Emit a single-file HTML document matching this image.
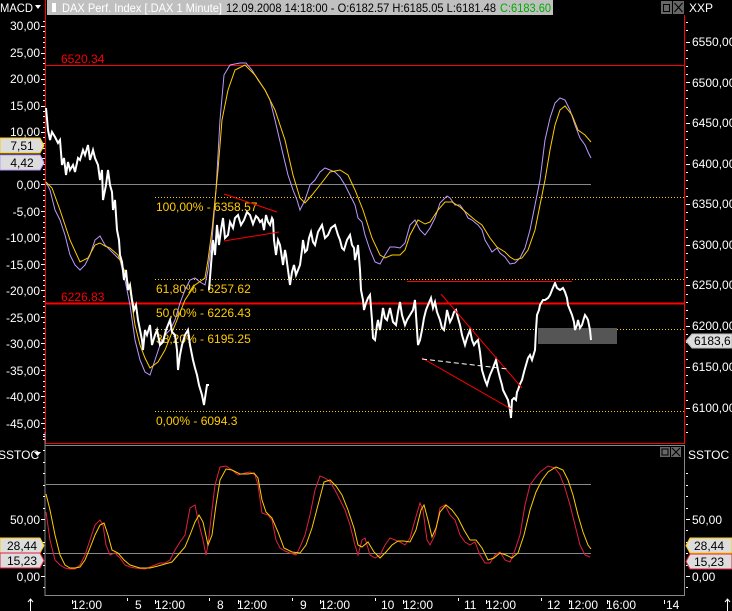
<!DOCTYPE html>
<html><head><meta charset="utf-8"><style>
html,body{margin:0;padding:0;background:#000;}
svg{display:block;font-family:"Liberation Sans",sans-serif;font-size:12px;}
</style></head><body>
<svg width="732" height="611" viewBox="0 0 732 611" xmlns="http://www.w3.org/2000/svg">
<rect width="732" height="611" fill="#000"/>
<!-- title bar -->
<rect x="47" y="0" width="506" height="15" fill="#c0c0c0"/>
<rect x="52" y="3" width="4" height="9" fill="#fff"/>
<text x="62" y="12" fill="#fff" textLength="160" lengthAdjust="spacingAndGlyphs">DAX Perf. Index [.DAX  1 Minute]</text>
<text x="226" y="12" fill="#000" textLength="270" lengthAdjust="spacingAndGlyphs">12.09.2008 14:18:00 - O:6182.57 H:6185.05 L:6181.48</text>
<text x="500" y="12" fill="#0a0" textLength="51" lengthAdjust="spacingAndGlyphs">C:6183.60</text>
<text x="0" y="12" fill="#fff" textLength="33" lengthAdjust="spacingAndGlyphs">MACD</text>
<path d="M35 5 L41 5 L38 9 Z" fill="#fff"/>
<rect x="661" y="1" width="11" height="13" fill="#666"/><rect x="663.5" y="4.5" width="6" height="7" fill="none" stroke="#000"/>
<rect x="673" y="1" width="11" height="13" fill="#666"/><path d="M674.5 3 L682.5 12 M682.5 3 L674.5 12" stroke="#000"/>
<text x="689" y="12" fill="#fff">XXP</text>

<!-- main chart borders -->
<line x1="45.5" y1="0" x2="45.5" y2="443" stroke="#f00"/>
<line x1="684.5" y1="15" x2="684.5" y2="443" stroke="#f00"/>
<line x1="45" y1="443.5" x2="685" y2="443.5" stroke="#f00"/>
<!-- lower panel border -->
<line x1="45" y1="445.5" x2="685" y2="445.5" stroke="#888"/>
<line x1="684.5" y1="445" x2="684.5" y2="596" stroke="#888"/>
<line x1="45" y1="432" x2="45" y2="596" stroke="#888"/>
<line x1="45" y1="595.5" x2="685" y2="595.5" stroke="#888"/>
<rect x="660" y="447" width="10" height="10" fill="#666"/><rect x="662" y="449" width="6" height="6" fill="none" stroke="#000"/>
<rect x="671" y="447" width="10" height="10" fill="#666"/><path d="M672 448 L680 456 M680 448 L672 456" stroke="#000"/>
<text x="688" y="459" fill="#fff">SSTOC</text>
<text x="-2" y="459" fill="#fff">SSTOC</text>
<path d="M34 452 L41 452 L37.5 456 Z" fill="#fff"/>

<!-- left axis -->
<g fill="#fff" text-anchor="end">
<text x="40" y="30">30,00</text><text x="40" y="57">25,00</text><text x="40" y="83">20,00</text>
<text x="40" y="110">15,00</text><text x="40" y="136">10,00</text>
<text x="40" y="189">0,00</text><text x="40" y="216">-5,00</text><text x="40" y="242">-10,00</text>
<text x="40" y="269">-15,00</text><text x="40" y="295">-20,00</text><text x="40" y="322">-25,00</text>
<text x="40" y="348">-30,00</text><text x="40" y="375">-35,00</text><text x="40" y="401">-40,00</text>
<text x="40" y="428">-45,00</text>
<text x="40" y="524">50,00</text><text x="40" y="581">0,00</text>
</g>
<g stroke="#fff">
<path d="M41 26.5h4M41 53.5h4M41 79.5h4M41 106.5h4M41 132.5h4M41 158.5h4M41 184.5h4M41 211.5h4M41 237.5h4M41 264.5h4M41 290.5h4M41 317.5h4M41 343.5h4M41 370.5h4M41 396.5h4M41 423.5h4M41 519.5h4M41 576.5h4"/>
<path d="M43 21.5h2M43 31.5h2M43 37.5h2M43 42.5h2M43 47.5h2M43 58.5h2M43 63.5h2M43 69.5h2M43 74.5h2M43 84.5h2M43 90.5h2M43 95.5h2M43 100.5h2M43 111.5h2M43 116.5h2M43 122.5h2M43 127.5h2M43 137.5h2M43 143.5h2M43 148.5h2M43 153.5h2M43 164.5h2M43 169.5h2M43 174.5h2M43 179.5h2M43 190.5h2M43 195.5h2M43 200.5h2M43 206.5h2M43 216.5h2M43 222.5h2M43 227.5h2M43 232.5h2M43 243.5h2M43 248.5h2M43 253.5h2M43 259.5h2M43 269.5h2M43 275.5h2M43 280.5h2M43 285.5h2M43 296.5h2M43 301.5h2M43 306.5h2M43 312.5h2M43 322.5h2M43 328.5h2M43 333.5h2M43 338.5h2M43 349.5h2M43 354.5h2M43 359.5h2M43 365.5h2M43 375.5h2M43 381.5h2M43 386.5h2M43 391.5h2M43 402.5h2M43 407.5h2M43 412.5h2M43 418.5h2M43 428.5h2M43 434.5h2M43 439.5h2"/>
<path d="M43 436.5h2M43 450.5h2M43 462.5h2M43 473.5h2M43 485.5h2M43 496.5h2M43 508.5h2M43 530.5h2M43 542.5h2M43 553.5h2M43 565.5h2M43 587.5h2"/>
</g>
<!-- left tags -->
<path d="M0 138 H40 L44 145.5 L40 153 H0 Z" fill="#ddd" stroke="#fc0"/>
<text x="22" y="150" text-anchor="middle" fill="#000">7,51</text>
<path d="M0 155 H40 L44 162.5 L40 170 H0 Z" fill="#ddd" stroke="#b9f"/>
<text x="22" y="167" text-anchor="middle" fill="#000">4,42</text>
<path d="M0 538 H40 L44 545.5 L40 553 H0 Z" fill="#ddd" stroke="#fc0"/>
<text x="22" y="550" text-anchor="middle" fill="#000">28,44</text>
<path d="M0 553 H40 L44 560.5 L40 568 H0 Z" fill="#ddd" stroke="#e02040"/>
<text x="22" y="565" text-anchor="middle" fill="#000">15,23</text>

<!-- right axis -->
<g fill="#fff">
<text x="692" y="46">6550,00</text><text x="692" y="87">6500,00</text><text x="692" y="127">6450,00</text>
<text x="692" y="168">6400,00</text><text x="692" y="208">6350,00</text><text x="692" y="249">6300,00</text>
<text x="692" y="289">6250,00</text><text x="692" y="330">6200,00</text><text x="692" y="371">6150,00</text>
<text x="692" y="412">6100,00</text><text x="692" y="524">50,00</text><text x="692" y="581">0,00</text>
</g>
<g stroke="#fff">
<path d="M686 42.5h4M686 82.5h4M686 123.5h4M686 164.5h4M686 204.5h4M686 245.5h4M686 285.5h4M686 326.5h4M686 367.5h4M686 408.5h4M686 519.5h4M686 576.5h4"/>
<path d="M686 22.5h2M686 30.5h2M686 50.5h2M686 58.5h2M686 66.5h2M686 74.5h2M686 90.5h2M686 98.5h2M686 107.5h2M686 115.5h2M686 131.5h2M686 139.5h2M686 147.5h2M686 155.5h2M686 172.5h2M686 180.5h2M686 188.5h2M686 196.5h2M686 212.5h2M686 220.5h2M686 229.5h2M686 237.5h2M686 253.5h2M686 261.5h2M686 269.5h2M686 277.5h2M686 294.5h2M686 302.5h2M686 310.5h2M686 318.5h2M686 334.5h2M686 342.5h2M686 351.5h2M686 359.5h2M686 375.5h2M686 383.5h2M686 391.5h2M686 400.5h2M686 416.5h2M686 424.5h2M686 432.5h2"/>
<path d="M686 473.5h2M686 485.5h2M686 496.5h2M686 508.5h2M686 530.5h2M686 542.5h2M686 553.5h2M686 565.5h2M686 587.5h2"/>
</g>
<path d="M732 334 H692 L686 341 L692 348 H732 Z" fill="#ddd" stroke="#bbb"/>
<text x="694" y="345" fill="#000">6183,6</text>
<path d="M732 538 H690 L686 545.5 L690 553 H732 Z" fill="#ddd" stroke="#fc0"/>
<text x="694" y="550" fill="#000">28,44</text>
<path d="M732 554 H690 L686 561.5 L690 569 H732 Z" fill="#ddd" stroke="#e02040"/>
<text x="694" y="566" fill="#000">15,23</text>

<!-- horizontal levels -->
<line x1="46" y1="65.5" x2="684" y2="65.5" stroke="#f00"/>
<text x="61" y="63" fill="#f00">6520.34</text>
<line x1="46" y1="184.5" x2="591" y2="184.5" stroke="#888"/>
<g stroke="#fc0" stroke-dasharray="1,2">
<line x1="155" y1="197.5" x2="684" y2="197.5"/>
<line x1="155" y1="279.5" x2="684" y2="279.5"/>
<line x1="155" y1="329.5" x2="684" y2="329.5"/>
<line x1="155" y1="411.5" x2="684" y2="411.5"/>
</g>
<rect x="538" y="328" width="79" height="16" fill="#555"/>
<g fill="#fc0">
<text x="156" y="211">100,00% - 6358.57</text>
<text x="156" y="293">61,80% - 6257.62</text>
<text x="156" y="317">50,00% - 6226.43</text>
<text x="156" y="343">38,20% - 6195.25</text>
<text x="156" y="425">0,00% - 6094.3</text>
</g>
<line x1="46" y1="303.5" x2="684" y2="303.5" stroke="#f00" stroke-width="2"/>
<text x="61" y="301" fill="#f00">6226.83</text>

<!-- MACD lines -->
<polyline fill="none" stroke="#b9f" stroke-width="1" points="46,182 50,190 55,210 60,220 65,235 70,255 75,265 80,270 85,265 90,255 95,240 100,236 105,245 110,250 115,255 120,260 125,280 130,305 135,340 140,360 145,372 150,375 155,360 160,345 165,335 170,330 175,320 180,303 185,290 190,280 195,278 200,282 205,285 208,270 212,240 216,190 220,120 224,75 230,65 240,63 246,63 252,70 258,80 265,90 270,100 275,120 282,150 288,175 293,190 297,200 300,210 305,200 310,185 315,180 320,172 325,168 330,170 335,172 340,177 345,185 350,195 355,205 358,218 362,222 365,235 370,250 375,262 380,264 385,255 390,247 395,247 400,248 405,243 410,225 415,220 420,230 425,235 430,228 435,218 440,203 447,196 450,198 455,205 460,205 465,212 468,218 472,220 478,225 482,230 485,240 488,245 492,252 497,248 500,253 505,257 510,264 515,263 520,258 525,248 530,230 535,205 540,180 545,140 550,118 555,103 560,98 565,100 570,110 575,125 580,138 585,145 588,152 591,158"/>
<polyline fill="none" stroke="#fc0" stroke-width="1" points="46,182 52,188 60,210 70,240 80,262 88,258 95,245 100,243 105,246 110,248 118,255 125,272 130,290 135,325 140,345 145,358 150,368 158,362 165,350 175,325 185,300 195,285 205,278 208,260 212,230 218,170 222,120 228,90 235,70 245,65 255,75 265,90 275,110 285,140 293,175 300,198 305,203 312,195 320,185 330,172 340,170 348,175 355,190 363,210 372,238 380,255 385,258 392,255 400,255 405,250 410,235 418,220 425,224 430,222 438,210 445,202 452,202 460,207 468,214 475,220 482,225 490,238 497,247 505,252 510,257 515,260 522,258 528,250 535,230 540,205 545,180 550,150 555,125 560,110 565,106 572,115 578,130 585,135 591,142"/>

<!-- price line -->
<polyline fill="none" stroke="#fff" stroke-width="2" points="46,108 48,130 50,140 52,132 55,137 58,143 60,140 62,165 64,158 66,175 68,162 70,170 73,165 75,172 78,158 80,160 83,150 85,155 88,145 90,160 93,150 95,158 98,165 100,180 102,170 103,200 105,190 106,185 108,170 110,185 112,192 113,210 115,200 117,230 119,240 120,255 122,262 124,280 126,270 128,290 130,285 132,300 134,310 136,305 138,320 140,330 142,340 143,350 145,330 147,335 150,325 152,345 155,335 157,330 160,345 163,342 166,330 170,320 172,332 175,335 177,350 178,370 180,355 182,345 185,335 188,330 190,345 193,360 195,368 197,375 199,385 202,395 204,405 205,398 207,385 209,385"/>
<polyline fill="none" stroke="#fff" stroke-width="2" points="209,290 211,265 213,240 215,255 217,225 219,245 221,230 223,218 225,238 228,235 230,222 233,228 235,218 238,215 241,225 244,220 247,212 250,215 253,224 256,216 258,218 260,222 262,220 264,230 266,215 268,222 270,225 272,218 273,220 274,240 276,255 278,240 280,245 282,258 283,265 285,250 286,255 288,270 290,285 292,272 294,265 296,275 298,270 300,265 302,250 303,240 305,252 307,250 309,238 311,232 313,242 315,245 318,232 322,225 325,238 328,235 331,228 335,225 338,235 340,240 342,248 344,250 347,240 350,235 352,245 354,248 355,260 357,252 358,245 360,270 361,290 363,300 364,310 366,303 368,298 370,295 372,320 373,338 375,340 377,325 378,320 380,330 383,308 385,318 387,320 389,312 390,308 393,322 396,325 398,312 400,302 402,315 405,325 407,320 410,315 413,310 415,300 417,330 418,345 420,340 422,330 424,318 426,310 428,305 431,298 433,308 435,302 437,312 440,320 442,328 444,330 446,318 447,310 450,322 452,318 454,312 456,310 458,318 460,325 462,335 465,345 467,338 470,330 472,340 474,345 476,342 478,340 480,352 482,370 485,380 487,385 489,378 490,375 493,368 496,360 498,370 500,378 502,385 503,390 506,396 508,400 510,410 511,418 512,400 514,398 516,400 517,392 518,390 520,384 522,380 524,372 526,365 528,358 530,355 532,360 535,350 536,330 537,315 539,310 540,305 543,300 545,300 548,298 550,295 552,290 555,283 557,288 560,290 563,288 565,292 567,298 568,305 570,310 572,315 574,322 575,330 577,325 578,320 580,328 582,325 584,318 585,315 587,318 588,320 590,330 591,340"/>

<!-- trendlines -->
<g stroke="#f00" stroke-width="1">
<line x1="224" y1="194" x2="277" y2="212"/>
<line x1="224" y1="241" x2="279" y2="232"/>
<line x1="407" y1="281.5" x2="572" y2="281.5"/>
<line x1="441" y1="294" x2="522" y2="388"/>
<line x1="422" y1="358" x2="511" y2="409"/>
</g>
<line x1="422" y1="359" x2="508" y2="369" stroke="#fff" stroke-dasharray="5,3"/>

<!-- stochastic -->
<line x1="46" y1="484.5" x2="591" y2="484.5" stroke="#888"/>
<line x1="46" y1="553.5" x2="591" y2="553.5" stroke="#888"/>
<polyline fill="none" stroke="#e02040" points="46,512 50,540 55,560 60,565 65,568 70,569 75,569 80,565 85,555 90,540 95,525 100,520 103,525 106,545 110,555 115,553 120,558 125,565 130,567 135,568 145,569 150,567 155,565 160,563 165,563 170,560 175,550 180,542 185,535 190,508 195,505 198,520 203,540 206,555 208,545 212,510 215,485 220,467 226,466 232,470 238,475 245,473 250,472 255,475 258,485 262,513 268,515 272,520 276,540 280,548 285,551 290,553 296,555 300,547 305,535 310,515 315,490 320,476 325,478 330,482 335,490 340,500 345,510 350,525 355,545 358,555 362,540 365,538 370,555 375,558 380,555 385,545 390,538 395,540 400,542 405,545 410,538 415,520 420,503 423,510 427,540 430,545 435,535 440,508 445,505 450,515 455,520 460,535 465,542 470,545 475,542 480,555 485,563 490,563 495,555 500,552 505,560 510,562 515,550 520,535 525,505 530,485 535,478 540,472 548,466 555,468 560,475 565,488 570,505 575,525 580,545 585,555 590,557"/>
<polyline fill="none" stroke="#fc0" points="46,494 50,510 55,535 60,555 65,565 70,568 75,568 80,567 85,560 90,548 95,535 100,525 104,523 108,535 112,550 118,553 124,560 130,565 140,568 150,568 158,566 165,564 172,562 178,555 185,547 190,535 195,522 199,515 203,522 208,545 212,535 216,505 220,480 226,469 232,470 240,474 248,474 254,473 258,478 262,500 266,512 272,518 278,532 284,548 292,552 300,553 306,545 312,528 318,505 324,482 330,480 336,486 342,495 348,510 354,528 358,545 362,547 368,542 374,552 380,558 386,552 392,545 398,541 404,541 410,542 416,530 421,510 424,505 428,520 432,537 436,528 440,512 446,505 452,510 458,518 464,530 470,540 476,540 482,548 488,560 494,558 500,553 506,555 512,558 518,553 524,535 530,510 536,492 542,480 548,472 556,467 563,470 568,480 573,495 578,515 583,532 588,545 591,549"/>

<!-- time axis -->
<g stroke="#fff">
<path d="M72.5 600v4M127.5 598v3M155.5 600v4M209.5 598v3M238.5 600v4M292.5 598v3M320.5 600v4M375.5 598v3M403.5 600v4M458.5 598v3M486.5 600v4M541.5 598v3M569.5 600v4M607.5 600v4M664.5 600v4"/>
</g>
<g fill="#fff">
<text x="72" y="609">12:00</text><text x="135" y="609">5</text><text x="155" y="609">12:00</text>
<text x="217" y="609">8</text><text x="237" y="609">12:00</text><text x="300" y="609">9</text>
<text x="320" y="609">12:00</text><text x="381" y="609">10</text><text x="403" y="609">12:00</text>
<text x="464" y="609">11</text><text x="486" y="609">12:00</text><text x="547" y="609">12</text>
<text x="568" y="609">12:00</text><text x="606" y="609">16:00</text><text x="666" y="609">14</text>
</g>
<path d="M30.5 611V599M28 602l2.5-3 2.5 3M727.5 611V599M725 602l2.5-3 2.5 3" stroke="#fff" fill="none"/>
</svg>
</body></html>
